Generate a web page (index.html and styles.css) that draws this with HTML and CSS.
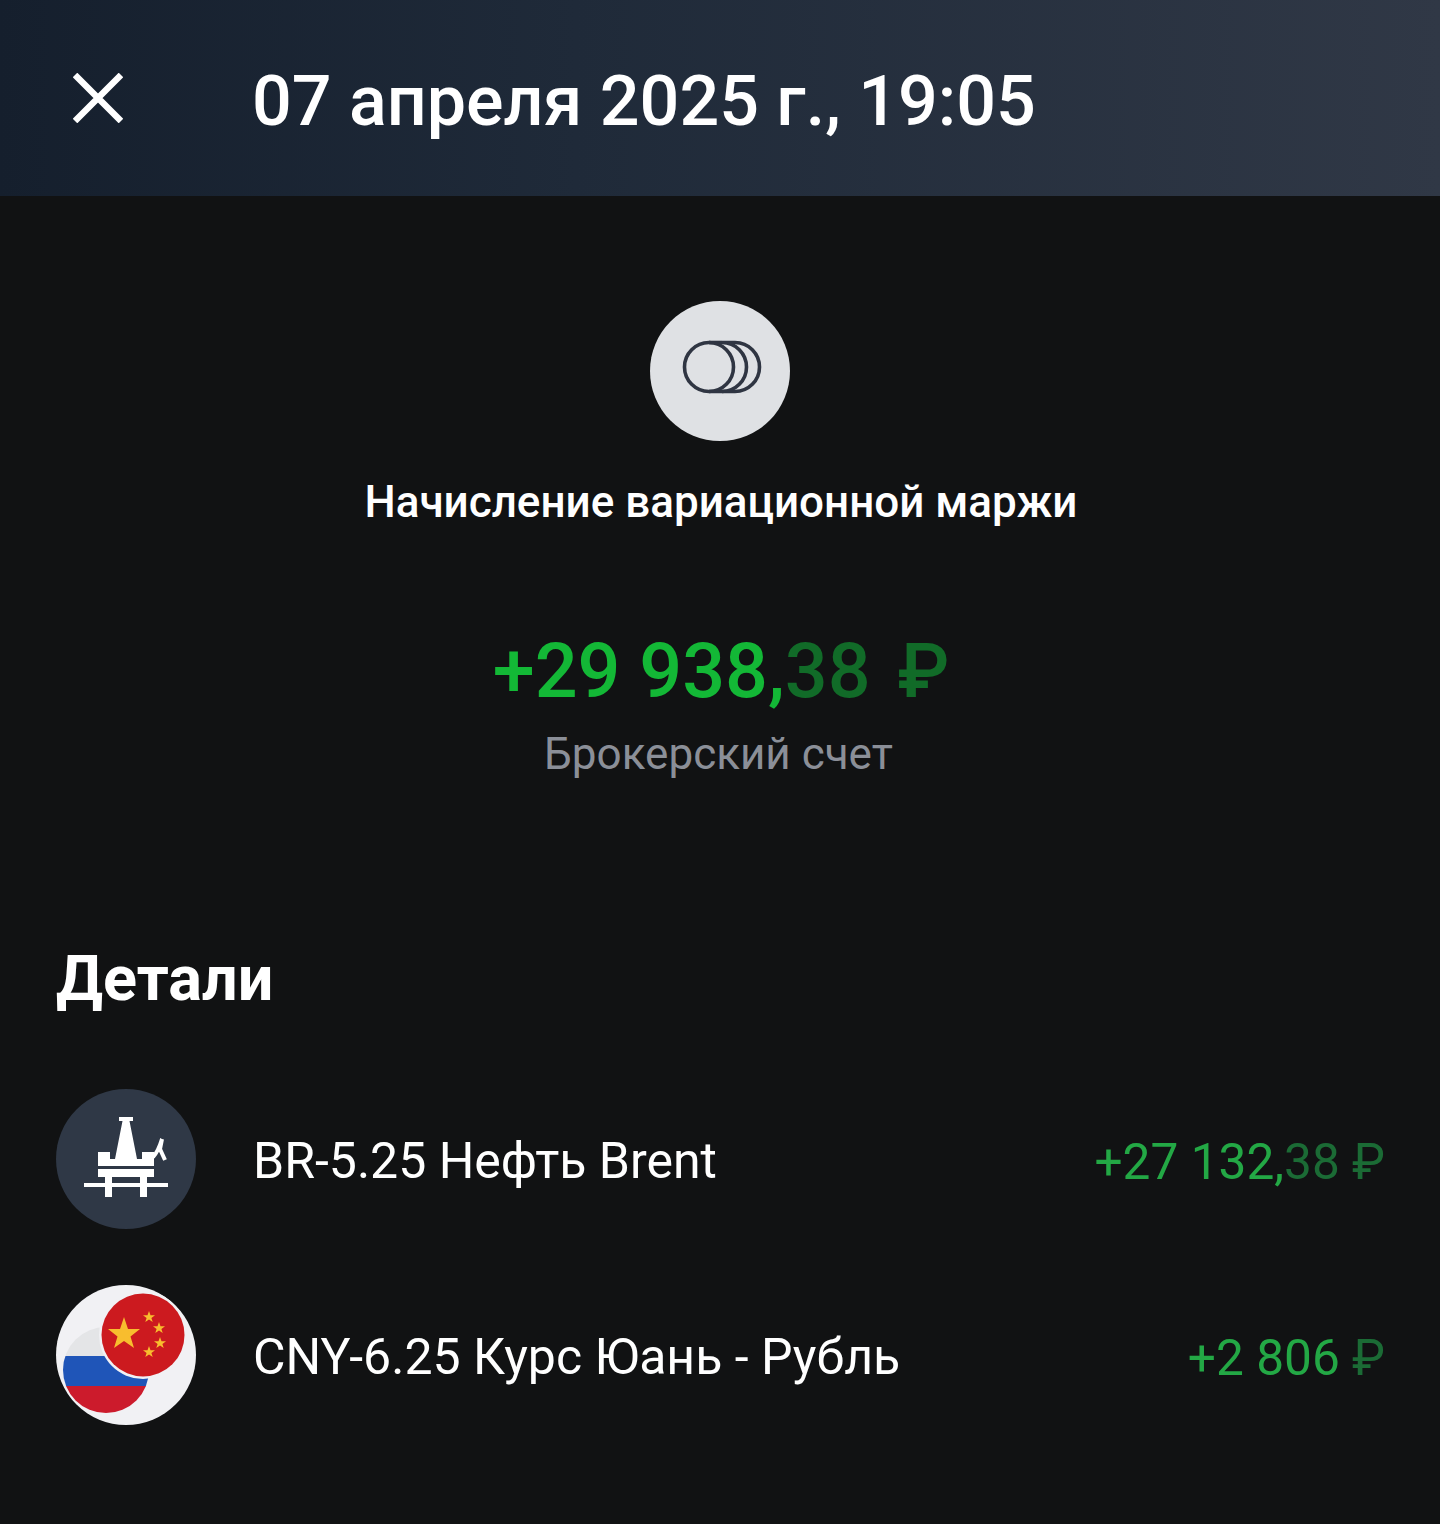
FILE: index.html
```html
<!DOCTYPE html>
<html lang="ru">
<head>
	<meta charset="UTF-8">
	<title>Операция</title>
	<link rel="stylesheet" href="styles.css">
</head>
<body>
	<header class="topbar">
		<svg class="close" width="50" height="50" viewBox="0 0 50 50"><path d="M2 2L48 48M48 2L2 48" stroke="#fff" stroke-width="6.5" fill="none"/></svg>
		<h1 class="topbar-title">07 апреля 2025 г., 19:05</h1>
	</header>
	<section class="summary">
		<div class="op-icon">
			<svg width="140" height="140" viewBox="0 0 140 140" fill="none" stroke="#2f3542" stroke-width="3.600">
				<path d="M85 41.500A24.500 24.500 0 0 1 85 90.500H72"/>
				<path d="M72 41.500H85M72 41.500A24.500 24.500 0 0 1 72 90.500H59"/>
				<path d="M59 41.500H72"/>
				<circle cx="59" cy="66" r="24.500"/>
			</svg>
		</div>
		<div class="op-name">Начисление вариационной маржи</div>
		<div class="op-sum"><span class="plus">+29 938,</span><span class="dim">38 ₽</span></div>
		<div class="op-account">Брокерский счет</div>
	</section>
	<section class="details">
		<h2 class="details-title">Детали</h2>
		<div class="row">
			<div class="avatar avatar-oil">
				<svg width="140" height="140" viewBox="0 0 140 140" fill="#fff">
					<path d="M63 28H77V32H73.500L81 70H86V63H98V77H42V63H54V70H59L66.500 32H63Z"/>
					<path d="M97 68Q102 63 106 50L104 60L109 71" fill="none" stroke="#fff" stroke-width="4"/>
					<rect x="42" y="80" width="56" height="8"/>
					<rect x="28" y="94" width="84" height="4"/>
					<rect x="49" y="88" width="7" height="20"/>
					<rect x="84" y="88" width="7" height="20"/>
				</svg>
			</div>
			<div class="row-name">BR-5.25 Нефть Brent</div>
			<div class="row-sum"><span class="plus">+27 132,</span><span class="dim">38 ₽</span></div>
		</div>
		<div class="row">
			<div class="avatar avatar-pair">
				<svg width="140" height="140" viewBox="0 0 140 140">
					<clipPath id="ru"><circle cx="50" cy="85" r="43"/></clipPath>
					<g clip-path="url(#ru)">
						<rect x="7" y="42" width="86" height="29" fill="#e4e5e7"/>
						<rect x="7" y="71" width="86" height="30" fill="#1f55b8"/>
						<rect x="7" y="101" width="86" height="28" fill="#cc1b2c"/>
					</g>
					<circle cx="87" cy="50" r="44" fill="#f1f1f4"/>
					<circle cx="87" cy="50" r="41.500" fill="#cc1a1f"/>
					<polygon fill="#f8bd2e" points="68,32 72,44 84,44 74.500,51.500 78,63 68,56 58,63 61.500,51.500 52,44 64,44"/>
					<polygon fill="#f8bd2e" points="93,26 94.500,30.200 99,30.200 95.400,32.900 96.700,37 93,34.500 89.300,37 90.600,32.900 87,30.200 91.500,30.200"/>
					<polygon fill="#f8bd2e" points="103,37 104.500,41.200 109,41.200 105.400,43.900 106.700,48 103,45.500 99.300,48 100.600,43.900 97,41.200 101.500,41.200"/>
					<polygon fill="#f8bd2e" points="104,52 105.500,56.200 110,56.200 106.400,58.900 107.700,63 104,60.500 100.300,63 101.600,58.900 98,56.200 102.500,56.200"/>
					<polygon fill="#f8bd2e" points="93,61 94.500,65.200 99,65.200 95.400,67.900 96.700,72 93,69.500 89.300,72 90.600,67.900 87,65.200 91.500,65.200"/>
				</svg>
			</div>
			<div class="row-name">CNY-6.25 Курс Юань - Рубль</div>
			<div class="row-sum"><span class="plus">+2 806</span><span class="dim"> ₽</span></div>
		</div>
	</section>
</body>
</html>
```

FILE: styles.css
```css
*{
	margin:0;
	padding:0;
	box-sizing:border-box;
}
body{
	background:#111213;
	color:#fff;
	font-family:Roboto,"Noto Sans",sans-serif;
	height:1524px;
	overflow:hidden;
}
.topbar{
	display:flex;
	align-items:center;
	height:196px;
	padding:0 0 0 73px;
	background:linear-gradient(90deg,#151f2d,#1f2a39 40%,#303846);
}
.close{
	flex:none;
	margin-right:129px;
}
.topbar-title{
	margin-top:6px;
	font-size:70px;
	font-weight:500;
	line-height:80px;
}
.summary{
	display:flex;
	flex-direction:column;
	align-items:center;
	padding-top:105px;
}
.op-icon{
	width:140px;
	height:140px;
	border-radius:50%;
	background:#dfe1e4;
}
.op-icon svg{
	display:block;
}
.op-name{
	margin-top:36px;
	font-size:44px;
	font-weight:500;
	line-height:50px;
	margin-left:2px;
}
.op-sum{
	margin-top:102px;
	margin-left:2px;
	font-size:75.500px;
	font-weight:500;
	line-height:84px;
}
.op-sum .dim{
	word-spacing:8px;
}
.op-account{
	margin-top:16px;
	font-size:44px;
	line-height:50px;
	color:#8b8f98;
	margin-right:3px;
}
.plus{
	color:#13b836;
}
.dim{
	color:#116b28;
}
.details{
	padding:0 56px;
}
.details-title{
	margin-top:165px;
	font-size:63px;
	font-weight:700;
	line-height:70px;
}
.row{
	display:flex;
	align-items:center;
	gap:57px;
	height:140px;
	margin-top:56px;
	font-size:50px;
}
.details-title + .row{
	margin-top:75px;
}
.row-name{
	flex:1;
	margin-top:4px;
}
.row-sum{
	margin-top:5px;
	margin-right:-1px;
	font-size:49.600px;
}
.avatar{
	flex:none;
	width:140px;
	height:140px;
	border-radius:50%;
	overflow:hidden;
}
.avatar svg{
	display:block;
}
.avatar-oil{
	background:#2f3846;
}
.avatar-pair{
	background:#f1f1f4;
}
.row-sum .plus{
	color:#23a845;
}
.row-sum .dim{
	color:#1b6b35;
}
```
